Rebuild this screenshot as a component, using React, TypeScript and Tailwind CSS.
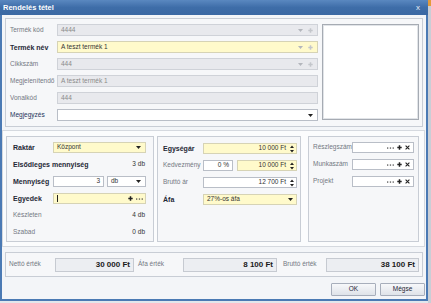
import React from "react";

type Variant = "disabled" | "yellow" | "white";

const boxStyles: Record<Variant, string> = {
  disabled: "bg-[#e8e9ed] border-[#cfd2d8] text-[#8a8a8a]",
  yellow: "bg-[#fffacb] border-[#d6d3b5] text-[#333]",
  white: "bg-white border-[#b9bec7] text-[#333]",
};

function Box({
  variant,
  className = "",
  children,
}: {
  variant: Variant;
  className?: string;
  children?: React.ReactNode;
}) {
  return (
    <div
      className={`flex items-center border px-[3px] text-[6.5px] leading-none ${boxStyles[variant]} ${className}`}
    >
      {children}
    </div>
  );
}

const Caret = ({ c = "#222" }: { c?: string }) => (
  <svg width="5" height="3" viewBox="0 0 5 3" className="shrink-0">
    <path d="M0 0h5L2.5 3z" fill={c} />
  </svg>
);

const Spin = () => (
  <svg width="4" height="8" viewBox="0 0 4 8" className="shrink-0">
    <path d="M0 3h4L2 0.5zM0 5h4L2 7.5z" fill="#222" />
  </svg>
);

const Plus = ({ c = "#222" }: { c?: string }) => (
  <svg width="5" height="5" viewBox="0 0 5 5" className="shrink-0">
    <path d="M2.5 0.3v4.4M0.3 2.5h4.4" stroke={c} strokeWidth="1.5" />
  </svg>
);

const Dots = () => (
  <svg width="7" height="2" viewBox="0 0 7 2" className="shrink-0">
    <rect x="0" y="0.5" width="1.3" height="1.1" fill="#333" />
    <rect x="2.8" y="0.5" width="1.3" height="1.1" fill="#333" />
    <rect x="5.6" y="0.5" width="1.3" height="1.1" fill="#333" />
  </svg>
);

const Cross = () => (
  <svg width="5" height="5" viewBox="0 0 5 5" className="shrink-0">
    <path d="M0.6 0.6l3.8 3.8M4.4 0.6L0.6 4.4" stroke="#222" strokeWidth="1.1" />
  </svg>
);

const grayLabel = "text-[6.5px] text-[#737882] leading-none whitespace-nowrap";
const boldLabel = "text-[7px] font-bold text-[#1f2836] leading-none whitespace-nowrap";

function TopRow({
  label,
  labelClass,
  variant,
  value,
  icons,
}: {
  label: string;
  labelClass: string;
  variant: Variant;
  value?: string;
  icons?: React.ReactNode;
}) {
  return (
    <div className="flex items-center h-[12px]">
      <span className={`w-[47px] ${labelClass}`}>{label}</span>
      <Box variant={variant} className="w-[261px] h-[12px] justify-between">
        <span>{value}</span>
        <span className="flex items-center gap-[5px] pr-[1px]">{icons}</span>
      </Box>
    </div>
  );
}

function PickIcons() {
  return (
    <span className="flex items-center gap-[3px]">
      <Dots />
      <Plus />
      <Cross />
    </span>
  );
}

function TotalBox({ w, value }: { w: string; value: string }) {
  return (
    <div
      className={`${w} h-[14px] flex items-center justify-end pr-[3px] border border-[#c6cad1] bg-[#eceef2] text-[8px] font-bold text-[#1a1a1a] leading-none`}
    >
      {value}
    </div>
  );
}

export default function App() {
  const grayIcons = (
    <>
      <Caret c="#b3b6bc" />
      <Plus c="#c3c6cb" />
    </>
  );

  return (
    <div className="w-[431px] h-[303px] flex bg-[#e3e7ec] font-['Liberation_Sans',Arial,sans-serif] overflow-hidden">
      <div className="w-[428px] h-[301px] flex flex-col">
        {/* title bar */}
        <div className="h-[15px] flex items-center justify-between px-[3px] bg-gradient-to-b from-[#5a88c0] via-[#3e6da8] to-[#3a68a3]">
          <span className="text-[7.5px] font-bold text-white leading-none">Rendelés tétel</span>
          <span className="text-[8px] text-[#e6edf6] leading-none pr-[5px]">x</span>
        </div>

        <div className="flex-1 flex flex-col border-x-2 border-b-2 border-[#4b7ab4] bg-[#f3f5f8]">
          {/* top panel */}
          <div className="mt-[3px] ml-[3px] w-[418px] h-[109px] border border-[#c8cdd5] bg-[#f6f7f9] flex gap-[4px] pl-[4px] pt-[5px]">
            <div className="flex flex-col gap-[5px]">
              <TopRow label="Termék kód" labelClass={grayLabel} variant="disabled" value="4444" icons={grayIcons} />
              <TopRow label="Termék név" labelClass={boldLabel + " text-[7.5px]"} variant="yellow" value="A teszt termék 1" icons={grayIcons} />
              <TopRow label="Cikkszám" labelClass={grayLabel} variant="disabled" value="444" icons={grayIcons} />
              <TopRow label="Megjelenítendő" labelClass={grayLabel} variant="disabled" value="A teszt termék 1" />
              <TopRow label="Vonalkód" labelClass={grayLabel} variant="disabled" value="444" />
              <TopRow
                label="Megjegyzés"
                labelClass="text-[6.5px] text-[#24345a] leading-none whitespace-nowrap"
                variant="white"
                icons={<Caret />}
              />
            </div>
            <div className="w-[97px] h-[96px] border border-[#a6abb3] bg-white shadow-[inset_0_0_0_1px_#e1e4e8]" />
          </div>

          {/* middle group */}
          <div className="mt-[3px] w-[423px] h-[117px] border border-[#d5d9df] bg-[#fbfcfd] flex pl-[3px] pt-[5px]">
            {/* left panel */}
            <div className="w-[148px] h-[106px] border border-[#c8cdd5] bg-[#f6f7f9] pl-[6px] pt-[5px] flex flex-col gap-[6px]">
              <div className="flex items-center h-[11px]">
                <span className={`w-[40px] ${boldLabel}`}>Raktár</span>
                <Box variant="yellow" className="w-[93px] h-[11px] justify-between pr-[4px]">
                  <span>Központ</span>
                  <Caret />
                </Box>
              </div>
              <div className="flex items-center justify-between h-[11px] w-[133px]">
                <span className={boldLabel}>Elsődleges mennyiség</span>
                <span className="text-[6.5px] text-[#333] leading-none pr-[1px]">3 db</span>
              </div>
              <div className="flex items-center h-[11px]">
                <span className={`w-[40px] ${boldLabel}`}>Mennyiség</span>
                <Box variant="white" className="w-[51px] h-[11px] justify-end">
                  <span>3</span>
                </Box>
                <Box variant="white" className="ml-[3px] w-[39px] h-[11px] justify-between pr-[4px]">
                  <span>db</span>
                  <Caret />
                </Box>
              </div>
              <div className="flex items-center h-[11px]">
                <span className={`w-[40px] ${boldLabel}`}>Egyedek</span>
                <Box variant="yellow" className="w-[93px] h-[11px] justify-between pr-[2px]">
                  <span className="w-[1px] h-[7px] bg-[#222]" />
                  <span className="flex items-center gap-[3px]">
                    <Plus />
                    <Dots />
                  </span>
                </Box>
              </div>
              <div className="flex items-center justify-between h-[11px] w-[133px]">
                <span className={grayLabel}>Készleten</span>
                <span className="text-[6.5px] text-[#333] leading-none pr-[1px]">4 db</span>
              </div>
              <div className="flex items-center justify-between h-[11px] w-[133px]">
                <span className={grayLabel}>Szabad</span>
                <span className="text-[6.5px] text-[#333] leading-none pr-[1px]">0 db</span>
              </div>
            </div>

            {/* middle panel */}
            <div className="ml-[3px] w-[144px] h-[106px] border border-[#c8cdd5] bg-[#f6f7f9] pl-[5px] pt-[6px] flex flex-col gap-[6px]">
              <div className="flex items-center h-[11px]">
                <span className={`w-[40px] ${boldLabel}`}>Egységár</span>
                <Box variant="yellow" className="w-[94px] h-[11px] justify-end gap-[4px] pr-[2px]">
                  <span>10 000 Ft</span>
                  <Spin />
                </Box>
              </div>
              <div className="flex items-center h-[11px]">
                <span className={`w-[40px] ${grayLabel}`}>Kedvezmény</span>
                <Box variant="white" className="w-[30px] h-[11px] justify-end">
                  <span>0 %</span>
                </Box>
                <Box variant="yellow" className="ml-[4px] w-[60px] h-[11px] justify-end gap-[4px] pr-[2px]">
                  <span>10 000 Ft</span>
                  <Spin />
                </Box>
              </div>
              <div className="flex items-center h-[11px]">
                <span className={`w-[40px] ${grayLabel}`}>Bruttó ár</span>
                <Box variant="white" className="w-[94px] h-[11px] justify-end gap-[4px] pr-[2px]">
                  <span>12 700 Ft</span>
                  <Spin />
                </Box>
              </div>
              <div className="flex items-center h-[11px]">
                <span className={`w-[40px] ${boldLabel}`}>Áfa</span>
                <Box variant="yellow" className="w-[94px] h-[11px] justify-between pr-[3px]">
                  <span>27%-os áfa</span>
                  <Caret />
                </Box>
              </div>
            </div>

            {/* right panel */}
            <div className="ml-[7px] w-[111px] h-[106px] border border-[#c8cdd5] bg-[#f6f7f9] pl-[4px] pt-[5px] flex flex-col gap-[6px]">
              {["Részlegszám", "Munkaszám", "Projekt"].map((l) => (
                <div key={l} className="flex items-center h-[11px]">
                  <span className={`w-[39px] ${grayLabel}`}>{l}</span>
                  <Box variant="white" className="w-[62px] h-[11px] justify-end pr-[3px]">
                    <PickIcons />
                  </Box>
                </div>
              ))}
            </div>
          </div>

          {/* totals */}
          <div className="mt-[5px] ml-[3px] w-[418px] h-[25px] border border-[#c8cdd5] bg-[#f6f7f9] flex items-center pl-[3px]">
            <span className={`w-[46px] ${grayLabel}`}>Nettó érték</span>
            <TotalBox w="w-[79px]" value="30 000 Ft" />
            <span className={`ml-[4px] w-[45px] ${grayLabel}`}>Áfa érték</span>
            <TotalBox w="w-[94px]" value="8 100 Ft" />
            <span className={`ml-[6px] w-[43px] ${grayLabel}`}>Bruttó érték</span>
            <TotalBox w="w-[93px]" value="38 100 Ft" />
          </div>

          {/* buttons */}
          <div className="mt-[6px] flex justify-end gap-[4px] pr-[1px]">
            {["OK", "Mégse"].map((b) => (
              <div
                key={b}
                className="w-[45px] h-[13px] flex items-center justify-center border border-[#a7aebb] rounded-[1px] bg-gradient-to-b from-[#f7f8fa] to-[#dfe3e9] text-[6.5px] text-[#1f2836] leading-none"
              >
                {b}
              </div>
            ))}
          </div>
        </div>
      </div>
      <div className="flex-1 flex flex-col">
        <div className="h-[6px] bg-[#e39a3b]" />
        <div className="flex-1 bg-[#c9ced6]" />
      </div>
    </div>
  );
}
